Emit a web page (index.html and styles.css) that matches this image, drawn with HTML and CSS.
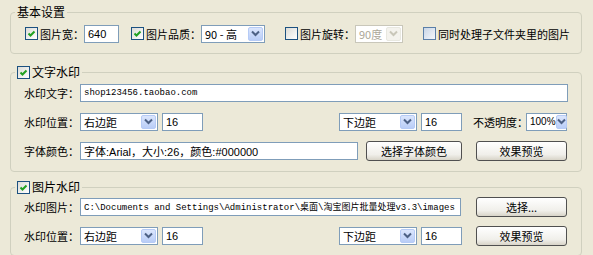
FILE: index.html
```html
<!DOCTYPE html>
<html lang="zh-CN">
<head>
    <meta charset="UTF-8">
    <title>淘宝图片批量处理</title>
    <link rel="stylesheet" href="styles.css">
</head>
<body>
    <fieldset class="group basic">
        <legend>基本设置</legend>
        <div class="row">
            <label class="check opt-width"><span class="box"><svg width="11" height="11"><path d="M2.5 5.5 L4.5 7.5 L8.5 3.5" stroke="#21a121" stroke-width="2" fill="none"/></svg></span>图片宽：</label>
            <input class="field num w-width" value="640">
            <label class="check opt-quality"><span class="box"><svg width="11" height="11"><path d="M2.5 5.5 L4.5 7.5 L8.5 3.5" stroke="#21a121" stroke-width="2" fill="none"/></svg></span>图片品质：</label>
            <div class="select w-quality"><span class="value">90 - 高</span><span class="arrow"><svg width="9" height="7"><path d="M1 1.5 L4.5 5 L8 1.5" stroke="#4d6185" stroke-width="2" fill="none"/></svg></span></div>
            <label class="check opt-rotate"><span class="box"></span>图片旋转：</label>
            <div class="select disabled w-rotate"><span class="value">90度</span><span class="arrow"><svg width="9" height="7"><path d="M1 1.5 L4.5 5 L8 1.5" stroke="#c9c7ba" stroke-width="2" fill="none"/></svg></span></div>
            <label class="check opt-sub"><span class="box light"></span>同时处理子文件夹里的图片</label>
        </div>
    </fieldset>

    <fieldset class="group text-mark">
        <legend><label class="check"><span class="box"><svg width="11" height="11"><path d="M2.5 5.5 L4.5 7.5 L8.5 3.5" stroke="#21a121" stroke-width="2" fill="none"/></svg></span>文字水印</label></legend>
        <div class="row">
            <span class="label">水印文字：</span>
            <input class="field mono w-text" value="shop123456.taobao.com">
        </div>
        <div class="row">
            <span class="label">水印位置：</span>
            <div class="select w-pos"><span class="value">右边距</span><span class="arrow"><svg width="9" height="7"><path d="M1 1.5 L4.5 5 L8 1.5" stroke="#4d6185" stroke-width="2" fill="none"/></svg></span></div>
            <input class="field num w-offset" value="16">
            <div class="select w-pos push"><span class="value">下边距</span><span class="arrow"><svg width="9" height="7"><path d="M1 1.5 L4.5 5 L8 1.5" stroke="#4d6185" stroke-width="2" fill="none"/></svg></span></div>
            <input class="field num w-offset" value="16">
            <span class="label opacity">不透明度：</span>
            <div class="select w-opacity"><span class="value small">100%</span><span class="arrow"><svg width="9" height="7"><path d="M1 1.5 L4.5 5 L8 1.5" stroke="#4d6185" stroke-width="2" fill="none"/></svg></span></div>
        </div>
        <div class="row">
            <span class="label">字体颜色：</span>
            <input class="field w-font" value="字体:Arial，大小:26，颜色:#000000">
            <button class="btn w-pick">选择字体颜色</button>
            <button class="btn w-preview">效果预览</button>
        </div>
    </fieldset>

    <fieldset class="group image-mark">
        <legend><label class="check"><span class="box"><svg width="11" height="11"><path d="M2.5 5.5 L4.5 7.5 L8.5 3.5" stroke="#21a121" stroke-width="2" fill="none"/></svg></span>图片水印</label></legend>
        <div class="row">
            <span class="label">水印图片：</span>
            <input class="field mono w-path" value="C:\Documents and Settings\Administrator\桌面\淘宝图片批量处理v3.3\images">
            <button class="btn w-choose">选择...</button>
        </div>
        <div class="row">
            <span class="label">水印位置：</span>
            <div class="select w-pos"><span class="value">右边距</span><span class="arrow"><svg width="9" height="7"><path d="M1 1.5 L4.5 5 L8 1.5" stroke="#4d6185" stroke-width="2" fill="none"/></svg></span></div>
            <input class="field num w-offset" value="16">
            <div class="select w-pos push"><span class="value">下边距</span><span class="arrow"><svg width="9" height="7"><path d="M1 1.5 L4.5 5 L8 1.5" stroke="#4d6185" stroke-width="2" fill="none"/></svg></span></div>
            <input class="field num w-offset" value="16">
            <button class="btn w-preview">效果预览</button>
        </div>
    </fieldset>
</body>
</html>
```

FILE: styles.css
```css
body {
    margin: 0;
    padding: 0;
    background-color: #ece9d8;
    font-family: "Noto Sans CJK SC", "Liberation Sans", sans-serif;
    font-size: 11px;
    color: #000;
    overflow: hidden;
}

.group {
    box-sizing: border-box;
    width: 572px;
    margin: 0 0 0 10px;
    padding: 0 13px 10px 13px;
    border: 1px solid #d0d0bf;
    border-radius: 4px;
    min-width: 0;
}

.group legend {
    margin-left: -9px;
    padding: 0 2px;
    height: 14px;
    line-height: 14px;
}

.basic {
    margin-top: 5px;
}

.basic legend {
    font-size: 12px;
}

.basic .row {
    margin-top: 5px;
}

.text-mark {
    margin-top: 11px;
    padding-bottom: 11px;
}

.text-mark .row:first-of-type {
    margin-top: 4px;
}

.image-mark {
    margin-top: 8px;
}

.image-mark .row:first-of-type {
    margin-top: 3px;
}

.row {
    display: flex;
    align-items: center;
    height: 19px;
    margin-top: 10px;
}

.check {
    display: flex;
    align-items: center;
    gap: 2px;
    white-space: nowrap;
}

.group legend .check {
    font-size: 12px;
}

.box {
    box-sizing: border-box;
    width: 13px;
    height: 13px;
    border: 1px solid #1c5180;
    background: linear-gradient(135deg, #dcdcd7, #ffffff);
    display: flex;
    align-items: center;
    justify-content: center;
    flex-shrink: 0;
}

.box.light {
    border-color: #5a7fa8;
    background: linear-gradient(135deg, #c9d6e6, #f4f7fb);
}

.label {
    width: 56px;
    flex-shrink: 0;
    white-space: nowrap;
}

.field {
    box-sizing: border-box;
    height: 18px;
    border: 1px solid #7f9db9;
    background: #fff;
    padding: 0 3px;
    margin: 0;
    font-family: "Liberation Sans", "Noto Sans CJK SC", sans-serif;
    font-size: 11px;
    color: #000;
    outline: none;
}

.field.num {
    font-family: "Liberation Sans", sans-serif;
    font-size: 11px;
}

.field.mono {
    font-family: "Liberation Mono", "Noto Sans CJK SC", monospace;
    font-size: 9px;
}

.select {
    box-sizing: border-box;
    height: 18px;
    border: 1px solid #7f9db9;
    background: #fff;
    display: flex;
    align-items: center;
    justify-content: space-between;
    padding: 0 1px 0 3px;
    flex-shrink: 0;
}

.select .value {
    white-space: nowrap;
}

.select .small {
    font-family: "Liberation Sans", sans-serif;
    font-size: 10px;
}

.arrow {
    box-sizing: border-box;
    width: 15px;
    height: 14px;
    border: 1px solid #b6cbf6;
    border-radius: 2px;
    background: linear-gradient(#dbe6fd, #b9cdf7);
    display: flex;
    align-items: center;
    justify-content: center;
}

.select.disabled {
    border-color: #c9c7ba;
    color: #aca899;
}

.select.disabled .arrow {
    border-color: #e8e8e0;
    background: #f4f3ee;
}

.btn {
    box-sizing: border-box;
    height: 20px;
    border: 1px solid #505050;
    border-radius: 3px;
    background: linear-gradient(#ffffff, #f0efea 70%, #d8d4c8);
    font-family: "Noto Sans CJK SC", sans-serif;
    font-size: 11px;
    padding: 0;
    margin: 0;
    color: #000;
}

/* widths and spacing */
.opt-width { width: 61px; margin-left: 1px; }
.w-width { width: 35px; }
.opt-quality { width: 70px; margin-left: 12px; }
.w-quality { width: 64px; }
.opt-rotate { width: 73px; margin-left: 20px; }
.w-rotate { width: 48px; }
.opt-sub { margin-left: 20px; }

.w-text { width: 488px; }
.w-pos { width: 78px; }
.w-offset { width: 41px; margin-left: 4px; }
.push { margin-left: 136px; }
.opacity { margin-left: 11px; width: 53px; }
.w-opacity { width: 41px; }
.w-font { width: 278px; }
.w-pick { width: 96px; margin-left: 8px; }
.w-preview { width: 91px; margin-left: 14px; }
.w-path { width: 381px; }
.w-choose { width: 91px; margin-left: 15px; }
```
